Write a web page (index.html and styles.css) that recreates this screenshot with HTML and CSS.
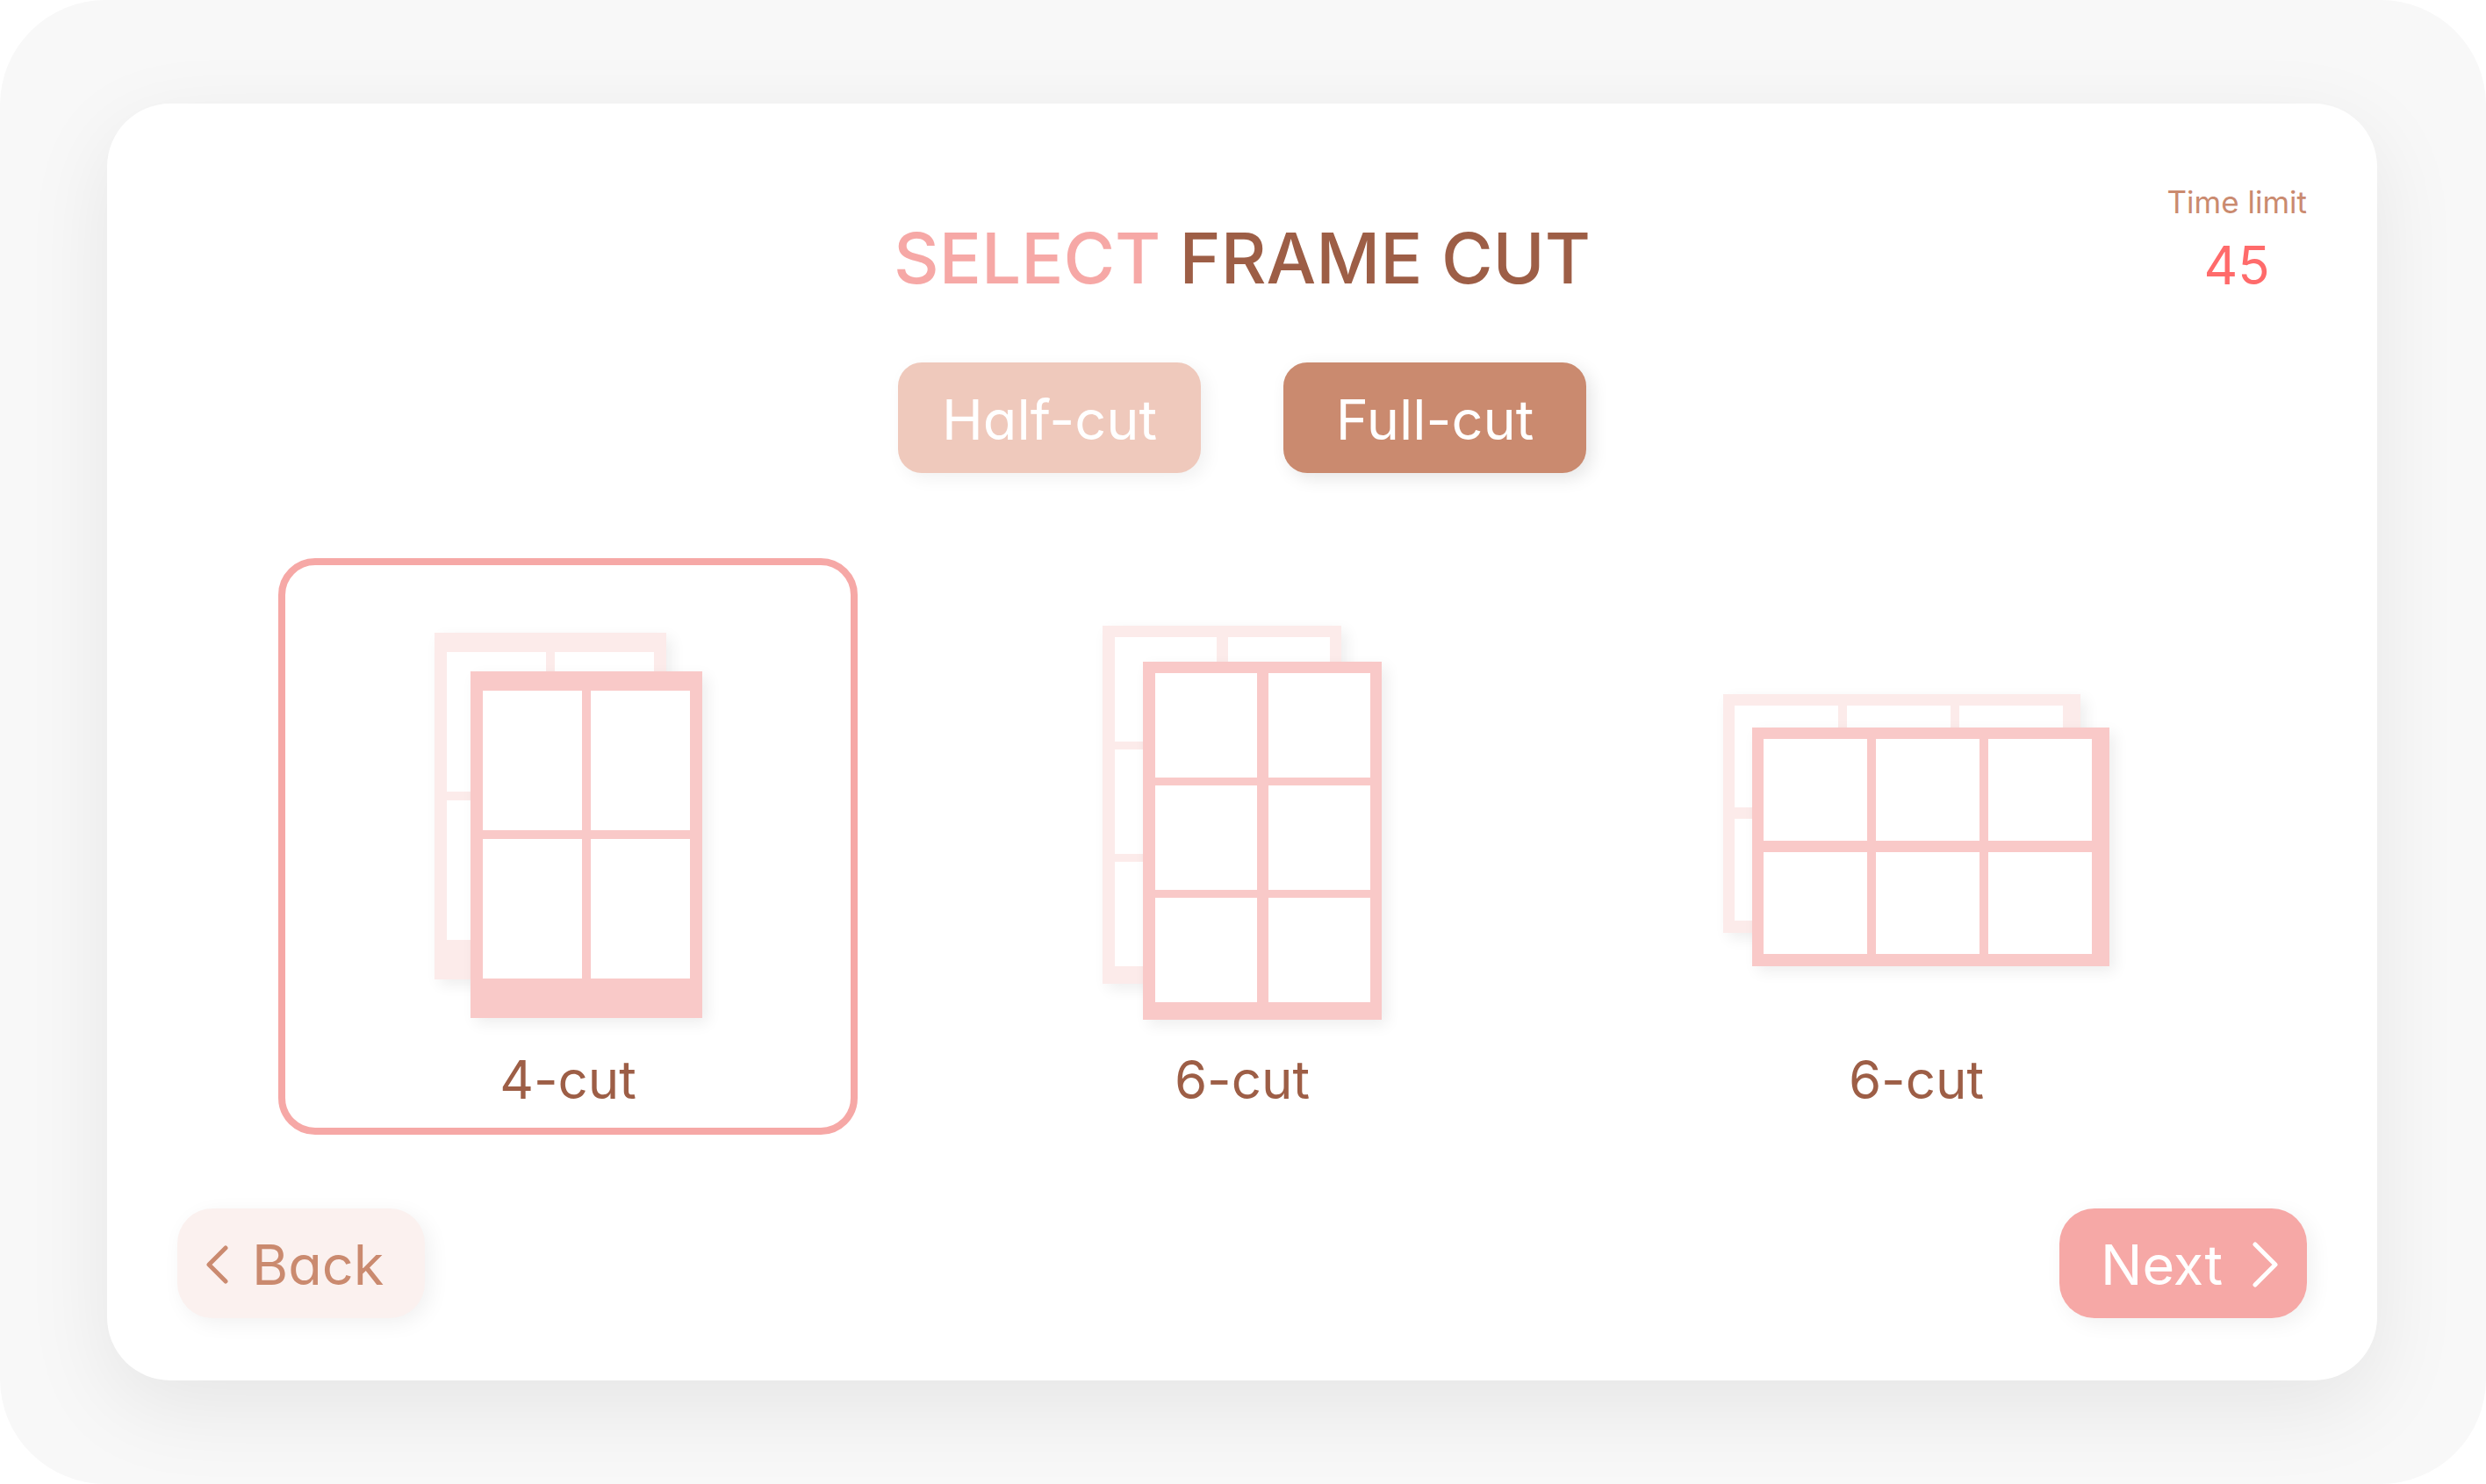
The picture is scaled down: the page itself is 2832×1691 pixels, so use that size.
FILE: index.html
```html
<!DOCTYPE html>
<html lang="en">
<head>
<meta charset="utf-8">
<meta name="viewport" content="width=device-width, initial-scale=1">
<title>Select frame cut</title>
<link rel="stylesheet" href="styles.css">
</head>
<body>
<div class="stage">
  <main class="panel">
    <header class="header">
      <h1 class="title"><span class="title-accent">SELECT</span> FRAME CUT</h1>
      <div class="timer">
        <span class="timer-label">Time limit</span>
        <span class="timer-value">45</span>
      </div>
    </header>

    <div class="modes">
      <button class="mode" type="button" aria-pressed="false">Half-cut</button>
      <button class="mode mode-active" type="button" aria-pressed="true">Full-cut</button>
    </div>

    <div class="options" role="radiogroup" aria-label="Frame cut">
      <label class="option">
        <input class="option-input" type="radio" name="cut" value="4" checked>
        <span class="art art-four">
          <span class="sheet sheet-back"><i></i><i></i><i></i><i></i></span>
          <span class="sheet sheet-front"><i></i><i></i><i></i><i></i></span>
        </span>
        <span class="option-name">4-cut</span>
      </label>
      <label class="option">
        <input class="option-input" type="radio" name="cut" value="6-portrait">
        <span class="art art-six">
          <span class="sheet sheet-back"><i></i><i></i><i></i><i></i><i></i><i></i></span>
          <span class="sheet sheet-front"><i></i><i></i><i></i><i></i><i></i><i></i></span>
        </span>
        <span class="option-name">6-cut</span>
      </label>
      <label class="option">
        <input class="option-input" type="radio" name="cut" value="6-landscape">
        <span class="art art-wide">
          <span class="sheet sheet-back"><i></i><i></i><i></i><i></i><i></i><i></i></span>
          <span class="sheet sheet-front"><i></i><i></i><i></i><i></i><i></i><i></i></span>
        </span>
        <span class="option-name">6-cut</span>
      </label>
    </div>

    <footer class="footer">
      <button class="nav nav-back" type="button">
        <svg class="chevron" width="25" height="44" viewBox="0 0 25 44" aria-hidden="true"><path d="M22 3 3 22 22 41"/></svg>
        Back
      </button>
      <button class="nav nav-next" type="button">
        Next
        <svg class="chevron" width="29" height="52" viewBox="0 0 29 52" aria-hidden="true"><path d="M3 3 26 26 3 49"/></svg>
      </button>
    </footer>
  </main>
</div>
</body>
</html>
```
FILE: styles.css
```css
* {
  box-sizing: border-box;
}

body {
  margin: 0;
  background: #fff;
  font-family: Inter, "Liberation Sans", sans-serif;
  /* single-storey "a" */
  font-feature-settings: "cv11";
  color: #9d5e46;
}

button {
  border: 0;
  padding: 0;
  font: inherit;
  font-feature-settings: inherit;
  cursor: pointer;
}

.stage {
  display: flex;
  min-height: 100vh;
  padding: 118px 124px 118px 122px;
  border-radius: 120px;
  background: #f8f8f8;
}

.panel {
  flex: 1;
  display: flex;
  flex-direction: column;
  padding: 90px 80px 71px;
  border-radius: 72px;
  background: #fff;
  box-shadow: 0 30px 100px rgba(0, 0, 0, 0.08);
}

.header {
  display: grid;
  grid-template-columns: 1fr auto 1fr;
}

.title {
  grid-column: 2;
  align-self: end;
  margin: 0;
  font-size: 80px;
  line-height: 100px;
  font-weight: 500;
}

.title-accent {
  color: #f6a8a6;
}

.timer {
  justify-self: end;
  display: flex;
  flex-direction: column;
  gap: 8px;
  text-align: center;
}

.timer-label {
  font-size: 35px;
  line-height: 44px;
  color: #ca8a6f;
}

.timer-value {
  font-size: 60px;
  line-height: 84px;
  color: #ff6b6b;
}

.modes {
  display: flex;
  justify-content: center;
  gap: 94px;
  margin-top: 69px;
}

.mode {
  width: 345px;
  height: 126px;
  padding-top: 3px;
  border-radius: 27px;
  background: #efc9bc;
  box-shadow: 6px 6px 20px rgba(0, 0, 0, 0.06);
  font-size: 63px;
  color: #fff;
}

.mode-active {
  background: #ca8a6f;
  box-shadow: 6px 6px 20px rgba(0, 0, 0, 0.1);
}

.options {
  display: flex;
  justify-content: center;
  gap: 108px;
  margin-top: 97px;
}

.option {
  display: flex;
  flex-direction: column;
  align-items: center;
  gap: 28px;
  width: 660px;
  padding: 69px 0 15px;
  border: 8px solid transparent;
  border-radius: 42px;
  cursor: pointer;
}

.option:has(:checked) {
  border-color: #f6a8a6;
}

.option-input {
  position: absolute;
  opacity: 0;
}

.option-name {
  font-size: 60px;
  line-height: 80px;
}

/* Two overlapping print sheets, back one top left, front one bottom right */
.art {
  display: grid;
  align-content: center;
  height: 449px;
}

.sheet {
  grid-area: 1 / 1;
  display: grid;
  box-shadow: 6px 6px 16px rgba(0, 0, 0, 0.07);
}

.sheet i {
  background: #fff;
}

.sheet-back {
  place-self: start;
  background: #fcebea;
}

.sheet-front {
  place-self: end;
  background: #f9c9c8;
}

.art-four {
  grid-template: 439px / 305px;
  padding-top: 6px;
}

.art-four .sheet {
  grid-template: repeat(2, 159px) / repeat(2, 113px);
  gap: 10px;
  padding: 22px 14px 45px;
}

.art-six {
  grid-template: 449px / 318px;
}

.art-six .sheet {
  grid-template: repeat(3, 119px) / repeat(2, 116px);
  gap: 9px 13px;
  padding: 13px 13px 20px 14px;
}

.art-wide {
  grid-template: 310px / 440px;
  padding-top: 16px;
}

.art-wide .sheet {
  grid-template: repeat(2, 116px) / repeat(3, 118px);
  gap: 13px 10px;
  padding: 13px 20px 14px 13px;
}

.footer {
  display: flex;
  justify-content: space-between;
  margin-top: 84px;
}

.nav {
  display: flex;
  align-items: center;
  width: 282px;
  height: 125px;
  border-radius: 40px;
  font-size: 63px;
  box-shadow: 6px 6px 24px rgba(0, 0, 0, 0.06);
}

.nav-back {
  gap: 27px;
  padding: 3px 0 0 33px;
  background: #fbf1ef;
  color: #ca8a6f;
}

.nav-next {
  justify-content: space-between;
  padding: 3px 33px 0 47px;
  background: #f6a8a6;
  color: #fff;
}

.chevron {
  fill: none;
  stroke: currentColor;
  stroke-width: 5;
  stroke-linecap: round;
  stroke-linejoin: round;
}
```
